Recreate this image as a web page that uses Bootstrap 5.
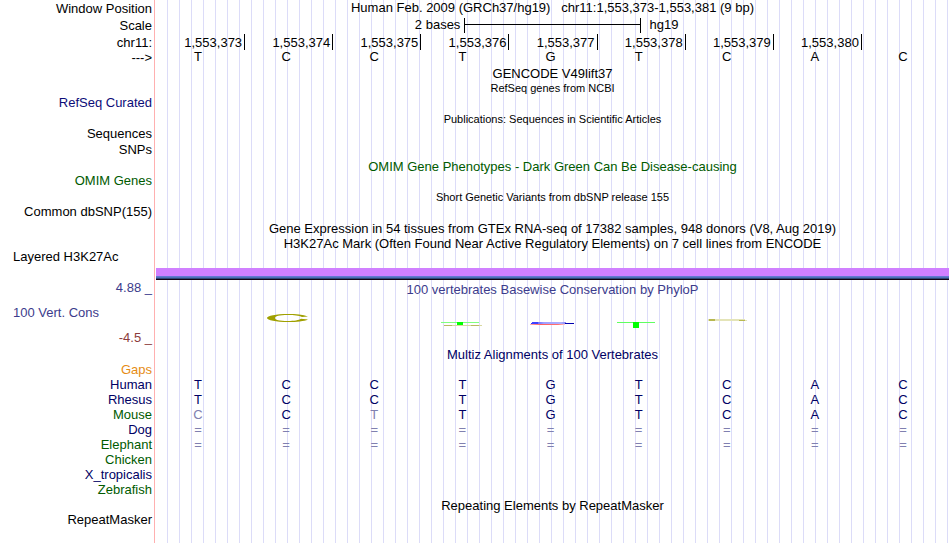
<!DOCTYPE html>
<html lang="en">
<head>
<meta charset="utf-8">
<meta name="viewport" content="width=device-width, initial-scale=1">
<title>Genome Browser – chr11:1,553,373-1,553,381</title>
<link href="https://cdn.jsdelivr.net/npm/bootstrap@5.3.0/dist/css/bootstrap.min.css" rel="stylesheet">
<style>
  :root { --side: 156px; --line: 15px; }
  body { font: 13px/15px "Liberation Sans", Arial, sans-serif; color: #000; background: #fff; }
  /* pink divider plus a vertical guide every 12px */
  .browser {
    padding-right: 1px;
    background-image: linear-gradient(#ffb0b0, #ffb0b0),
      repeating-linear-gradient(90deg, transparent 0 11px, #dcdcf8 11px 12px);
    background-size: 1px 100%, calc(100% - 156px) 100%;
    background-position: 154px 0, 156px 0;
    background-repeat: no-repeat;
  }
  .side { width: var(--side); flex: none; padding-right: 4px; text-align: right; white-space: nowrap; }
  .side-start { text-align: left; padding-left: 13px; }
  .track { text-align: center; white-space: nowrap; }
  .head-row .side { line-height: 17px; }
  .note { font-size: 11px; }
  .gap-1px { margin-top: 1px; }
  .gap-2px { margin-top: 2px; }
  .gap-s { margin-top: 10px; }
  .gap-m { margin-top: 16px; }
  .gap-l { margin-top: 32px; }
  .gap-line { margin-top: var(--line); }
  .gap-lines { margin-top: 30px; }
  .navy { color: #000064; }
  .refseq { color: #0c0c78; }
  .green { color: #005a00; }
  .cons { color: #3c3c8c; }
  .neg { color: #8c3c3c; }
  .amber { color: #e68c14; }
  .weak { color: #8080b0; }
  .scale-row { display: grid; grid-template-columns: 7fr 4fr 7fr; }
  .scale-left { text-align: right; padding-right: 4px; }
  .scale-right { text-align: left; padding-left: 9px; }
  .scale-bar { height: 15px; margin-top: 1px; border: solid #000; border-width: 0 1px; background: linear-gradient(#000, #000) 0 6px / 100% 1px no-repeat; }
  .bases { table-layout: fixed; width: 100%; border-collapse: separate; border-spacing: 0; }
  .bases th { font-weight: 400; padding: 0 4px 0 0; text-align: right; }
  .bases td { padding: 0 4px 0 0; text-align: center; vertical-align: top; height: 15px; }
  .ruler .ticks > * { padding-top: 1px; }
  .ruler .ticks td { text-align: right; padding-right: 2px; white-space: nowrap; }
  .ruler .ticks td + td { border-left: 1px solid #000; }
  .ruler .letters td { line-height: 13px; }
  .signal { height: 12px; margin-top: 17px; background: linear-gradient(#d080ff 0 8px, #6478d2 8px 9px, #5070b8 9px 10px, #304878 10px 11px, #140014 11px 12px); }
  .logo { display: block; width: 100%; height: 20px; margin: 15px 0; }
</style>
<script src="https://cdn.jsdelivr.net/npm/bootstrap@5.3.0/dist/js/bootstrap.bundle.min.js"></script>
</head>
<body>
<main class="browser min-vh-100 overflow-hidden">
  <header>
    <div class="d-flex head-row">
      <div class="side">Window Position</div>
      <div class="track flex-fill">Human Feb. 2009 (GRCh37/hg19) &nbsp; chr11:1,553,373-1,553,381 (9 bp)</div>
    </div>
    <div class="d-flex head-row">
      <div class="side">Scale</div>
      <div class="track flex-fill scale-row">
        <div class="scale-left">2 bases</div>
        <div class="scale-bar"></div>
        <div class="scale-right">hg19</div>
      </div>
    </div>
  </header>

  <table class="bases ruler">
    <colgroup><col style="width:156px"><col span="9"></colgroup>
    <tbody>
      <tr class="ticks"><th scope="row">chr11:</th><td>1,553,373</td><td>1,553,374</td><td>1,553,375</td><td>1,553,376</td><td>1,553,377</td><td>1,553,378</td><td>1,553,379</td><td>1,553,380</td><td></td></tr>
      <tr class="letters"><th scope="row">---&gt;</th><td>T</td><td>C</td><td>C</td><td>T</td><td>G</td><td>T</td><td>C</td><td>A</td><td>C</td></tr>
    </tbody>
  </table>

  <section class="d-flex">
    <div class="side">
      <div class="refseq gap-lines">RefSeq Curated</div>
      <div class="gap-m">Sequences</div>
      <div class="gap-1px">SNPs</div>
      <div class="green gap-m">OMIM Genes</div>
      <div class="gap-m">Common dbSNP(155)</div>
      <div class="side-start gap-lines">Layered H3K27Ac</div>
      <div class="cons gap-m">4.88 _</div>
      <div class="cons side-start gap-s">100 Vert. Cons</div>
      <div class="neg gap-s">-4.5 _</div>
    </div>
    <div class="track flex-fill">
      <div class="gap-1px">GENCODE V49lift37</div>
      <div class="note">RefSeq genes from NCBI</div>
      <div class="note gap-m">Publications: Sequences in Scientific Articles</div>
      <div class="green gap-l">OMIM Gene Phenotypes - Dark Green Can Be Disease-causing</div>
      <div class="note gap-m">Short Genetic Variants from dbSNP release 155</div>
      <div class="gap-m">Gene Expression in 54 tissues from GTEx RNA-seq of 17382 samples, 948 donors (V8, Aug 2019)</div>
      <div>H3K27Ac Mark (Often Found Near Active Regulatory Elements) on 7 cell lines from ENCODE</div>
      <div class="signal"></div>
      <div class="cons gap-2px">100 vertebrates Basewise Conservation by PhyloP</div>
      <svg class="logo" viewBox="0 0 793 20" preserveAspectRatio="none" role="img" aria-label="Conservation logo">
        <defs>
          <linearGradient id="blueFade"><stop offset="0" stop-color="#3030ff"/><stop offset=".3" stop-color="#a0a0ff"/><stop offset=".7" stop-color="#b0b0ff"/><stop offset="1" stop-color="#4040e0"/></linearGradient>
          <linearGradient id="redFade"><stop offset="0" stop-color="#ffb0b0"/><stop offset=".3" stop-color="#ff6060"/><stop offset=".8" stop-color="#ff7070"/><stop offset="1" stop-color="#ffd0d0"/></linearGradient>
        </defs>
        <path fill="#a0a000" fill-rule="evenodd" d="M152 4.400C147 2.600 140 2 132 2C120 2 111 3.800 111 6C111 8.300 120 10 132 10C141 10 148 9.200 152 7.400L145 6.800C143 8.200 138 9 132 9C123 9 119 8 119 6C119 4 123 3 132 3C138 3 143 3.600 146 4.900Z"/>
        <path fill="#80ff80" d="M285 10h38v1h-38z"/>
        <path fill="#00ff00" d="M301 10h6v3h-6z"/>
        <path fill="#b8b860" d="M288 13h8v1h-8zM315 13h8v1h-8z"/>
        <path fill="#d8d8a0" d="M296 13h19v1h-19zM323 13h3v1h-3z"/>
        <path fill="url(#blueFade)" d="M376 10h34v1h8v1h-43v-1h1z"/>
        <path fill="#4040ff" d="M376 10h6v2h-6z"/>
        <path fill="#0000b0" d="M409 11h9v1h-9z"/>
        <path fill="url(#redFade)" d="M374 12h35v1h-35z"/>
        <path fill="#60ff60" d="M461 10h38v1h-38z"/>
        <path fill="#00ff00" d="M477 10h6v6h-6z"/>
        <path fill="#e4e4b8" d="M552 7h37v1h2v1h-39z"/>
        <path fill="#b8b850" d="M553 7h6v2h-6zM583 8h6v1h-6z"/>
      </svg>
      <div class="navy">Multiz Alignments of 100 Vertebrates</div>
    </div>
  </section>

  <table class="bases navy">
    <colgroup><col style="width:156px"><col span="9"></colgroup>
    <tbody>
      <tr><th scope="row" class="amber">Gaps</th><td colspan="9"></td></tr>
      <tr><th scope="row">Human</th><td>T</td><td>C</td><td>C</td><td>T</td><td>G</td><td>T</td><td>C</td><td>A</td><td>C</td></tr>
      <tr><th scope="row">Rhesus</th><td>T</td><td>C</td><td>C</td><td>T</td><td>G</td><td>T</td><td>C</td><td>A</td><td>C</td></tr>
      <tr><th scope="row" class="green">Mouse</th><td class="weak">C</td><td>C</td><td class="weak">T</td><td>T</td><td>G</td><td>T</td><td>C</td><td>A</td><td>C</td></tr>
      <tr class="weak"><th scope="row" class="navy">Dog</th><td>=</td><td>=</td><td>=</td><td>=</td><td>=</td><td>=</td><td>=</td><td>=</td><td>=</td></tr>
      <tr class="weak"><th scope="row" class="green">Elephant</th><td>=</td><td>=</td><td>=</td><td>=</td><td>=</td><td>=</td><td>=</td><td>=</td><td>=</td></tr>
      <tr><th scope="row" class="green">Chicken</th><td colspan="9"></td></tr>
      <tr><th scope="row">X_tropicalis</th><td colspan="9"></td></tr>
      <tr><th scope="row" class="green">Zebrafish</th><td colspan="9"></td></tr>
    </tbody>
  </table>

  <section class="d-flex">
    <div class="side"><div class="gap-line">RepeatMasker</div></div>
    <div class="track flex-fill"><div class="gap-1px">Repeating Elements by RepeatMasker</div></div>
  </section>
</main>
</body>
</html>
